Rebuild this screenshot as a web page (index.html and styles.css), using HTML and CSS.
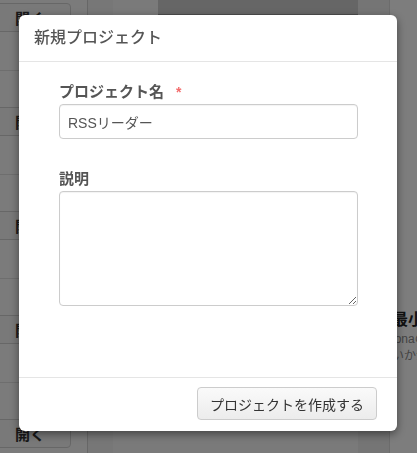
FILE: index.html
```html
<!DOCTYPE html>
<html lang="ja">
<head>
<meta charset="utf-8">
<link rel="stylesheet" href="styles.css">
</head>
<body>
<div class="page">
  <aside class="sidebar">
    <div class="row"><button class="open-btn">開く</button></div>
    <div class="row"><button class="open-btn">開く</button></div>
    <div class="row"><button class="open-btn">開く</button></div>
    <div class="row"><button class="open-btn">開く</button></div>
    <div class="row"><button class="open-btn">開く</button></div>
  </aside>
  <div class="gutter"></div>
  <main class="main">
    <div class="main-left"></div>
    <div class="banner"></div>
    <div class="main-mid"></div>
    <div class="cards">
      <div class="card-text">
        <div class="card-title">最小構成</div>
        <div class="card-sub">lonaのテンプレート</div>
        <div class="card-sub">いかがでしょう</div>
      </div>
    </div>
  </main>
</div>
<div class="overlay"></div>
<div class="modal">
  <div class="modal-header">
    <h3 class="modal-title">新規プロジェクト</h3>
  </div>
  <div class="modal-body">
    <div class="field">
      <label class="field-label">プロジェクト名<span class="req">*</span></label>
      <input class="text-input" type="text" value="RSSリーダー">
    </div>
    <div class="field field-desc">
      <label class="field-label">説明</label>
      <textarea class="text-area"></textarea>
    </div>
  </div>
  <div class="modal-footer">
    <button class="btn">プロジェクトを作成する</button>
  </div>
</div>
</body>
</html>
```
FILE: styles.css
```css
* { box-sizing: border-box; }
html, body {
  margin: 0;
  width: 417px;
  height: 453px;
  overflow: hidden;
  font-family: "Liberation Sans", "Noto Sans CJK JP", sans-serif;
  background: #f7f7f7;
}
.page {
  display: flex;
  width: 417px;
  height: 453px;
  overflow: hidden;
}
.sidebar {
  width: 88px;
  flex: none;
  background: #f6f6f6;
  border-right: 1px solid #cfcfcf;
  padding-top: 3px;
  overflow: hidden;
}
.row {
  height: 104px;
  display: flex;
  flex-direction: column;
}
.row::after {
  content: "";
  display: block;
  margin-top: 38px;
  border-top: 1px solid #dcdcdc;
}
.open-btn {
  width: 73px;
  height: 29px;
  margin-left: -2px;
  border: 1px solid #cfcfcf;
  border-radius: 0 4px 4px 0;
  background: #f2f2f2;
  font-family: "Liberation Sans", "Noto Sans CJK JP", sans-serif;
  font-weight: bold;
  font-size: 15px;
  color: #333;
  text-align: left;
  padding: 0 0 0 16px;
}
.gutter {
  width: 25px;
  flex: none;
  background: #eeeeee;
}
.main {
  flex: 1;
  min-width: 0;
  display: flex;
  background: #f4f4f4;
}
.main-left { width: 45px; flex: none; }
.banner {
  width: 200px;
  height: 15px;
  flex: none;
  background: #cdcdcd;
  border-bottom: 1px solid #9a9a9a;
}
.main-mid { width: 31px; flex: none; background: #eaeaea; }
.cards {
  flex: 1;
  min-width: 0;
  border-left: 1px solid #d8d8d8;
  background: #fbfbfb;
  overflow: hidden;
  padding-top: 309px;
}
.card-text { padding-left: 2px; white-space: nowrap; overflow: hidden; }
.card-title { font-weight: bold; font-size: 16px; color: #222; line-height: 22px; }
.card-sub { font-size: 12px; color: #888; line-height: 17px; }
.overlay {
  position: fixed;
  inset: 0;
  background: rgba(0, 0, 0, 0.5);
}
.modal {
  position: absolute;
  left: 19px;
  top: 15px;
  width: 378px;
  height: 416px;
  background: #fff;
  border-radius: 6px;
  box-shadow: 0 3px 9px rgba(0, 0, 0, 0.45);
  display: flex;
  flex-direction: column;
}
.modal-header {
  height: 47px;
  border-bottom: 1px solid #e5e5e5;
  padding: 0 15px;
  display: flex;
  align-items: center;
}
.modal-title {
  margin: 0;
  font-size: 16px;
  font-weight: 500;
  color: #555;
  line-height: 20px;
}
.modal-body {
  flex: 1;
  padding: 20px 39px 0 40px;
}
.field {
  display: flex;
  flex-direction: column;
}
.field-desc { margin-top: 30px; }
.field-label {
  font-size: 15px;
  font-weight: bold;
  color: #555;
  line-height: 20px;
  margin-bottom: 2px;
}
.req { color: #f36b6b; font-size: 14px; margin-left: 12px; }
.text-input {
  height: 35px;
  border: 1px solid #cccccc;
  border-radius: 4px;
  padding: 0 8px;
  font-family: "Liberation Sans", "Noto Sans CJK JP", sans-serif;
  font-size: 14px;
  color: #555;
  box-shadow: inset 0 1px 1px rgba(0,0,0,0.05);
  outline: none;
}
.text-area {
  height: 115px;
  border: 1px solid #cccccc;
  border-radius: 4px;
  box-shadow: inset 0 1px 1px rgba(0,0,0,0.05);
  outline: none;
}
.modal-footer {
  height: 54px;
  border-top: 1px solid #e5e5e5;
  padding: 9px 20px 0 0;
  display: flex;
  justify-content: flex-end;
  align-items: flex-start;
}
.btn {
  height: 33px;
  padding: 0 12px;
  border: 1px solid #cccccc;
  border-radius: 4px;
  background: linear-gradient(#fafafa, #ececec);
  font-family: "Liberation Sans", "Noto Sans CJK JP", sans-serif;
  font-size: 14px;
  color: #333;
}
```
